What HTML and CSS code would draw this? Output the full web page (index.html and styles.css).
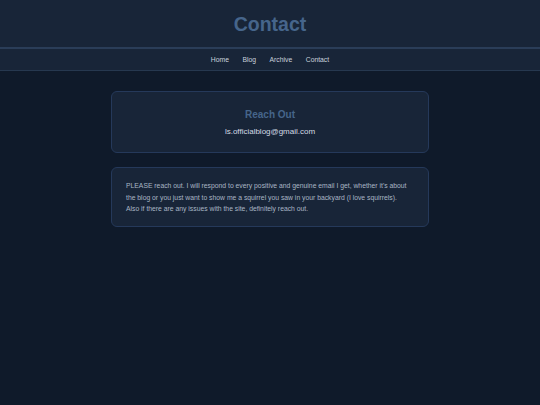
FILE: index.html
```html
<!DOCTYPE html>
<html lang="en">
<head>
<meta charset="utf-8">
<title>Contact</title>
<link rel="stylesheet" href="styles.css">
</head>
<body>
<header class="site-header">
  <h1 class="site-title">Contact</h1>
</header>
<nav class="site-nav">
  <a href="#">Home</a>
  <a href="#">Blog</a>
  <a href="#">Archive</a>
  <a href="#">Contact</a>
</nav>
<main class="content">
  <section class="card card-contact">
    <h2 class="card-title">Reach Out</h2>
    <p class="email">ls.officialblog@gmail.com</p>
  </section>
  <section class="card card-text">
    <p>PLEASE reach out. I will respond to every positive and genuine email I get, whether it's about the blog or you just want to show me a squirrel you saw in your backyard (I love squirrels). Also if there are any issues with the site, definitely reach out.</p>
  </section>
</main>
</body>
</html>
```
FILE: styles.css
```css
html, body {
  margin: 0;
  padding: 0;
}
body {
  background: #0f1a2a;
  font-family: "Liberation Sans", Arial, sans-serif;
  min-height: 405px;
}
.site-header {
  background: #182538;
  padding: 12px 0 11px;
  border-bottom: 2px solid #2a3d58;
  text-align: center;
}
.site-title {
  margin: 0;
  font-size: 19.5px;
  line-height: 24px;
  font-weight: bold;
  color: #46658b;
}
.site-nav {
  background: #182538;
  border-bottom: 1px solid #26384f;
  display: flex;
  justify-content: center;
  gap: 13.5px;
  height: 21px;
  align-items: center;
}
.site-nav a {
  color: #c9d2de;
  text-decoration: none;
  font-size: 6.8px;
  line-height: 21px;
}
.content {
  max-width: 318px;
  margin: 20px auto 0;
  display: flex;
  flex-direction: column;
  gap: 14px;
}
.card {
  background: #182538;
  border: 1px solid #25395a;
  border-radius: 6px;
}
.card-contact {
  padding: 17px 14px 15px;
  text-align: center;
}
.card-title {
  margin: 0;
  font-size: 10px;
  line-height: 12px;
  font-weight: bold;
  color: #46658b;
}
.email {
  margin: 6px 0 0;
  font-size: 8px;
  line-height: 10px;
  color: #d3dae4;
}
.card-text {
  padding: 12px 19px 11px 14px;
}
.card-text p {
  margin: 0;
  font-size: 6.8px;
  line-height: 11.5px;
  color: #a9b5c5;
}
```
